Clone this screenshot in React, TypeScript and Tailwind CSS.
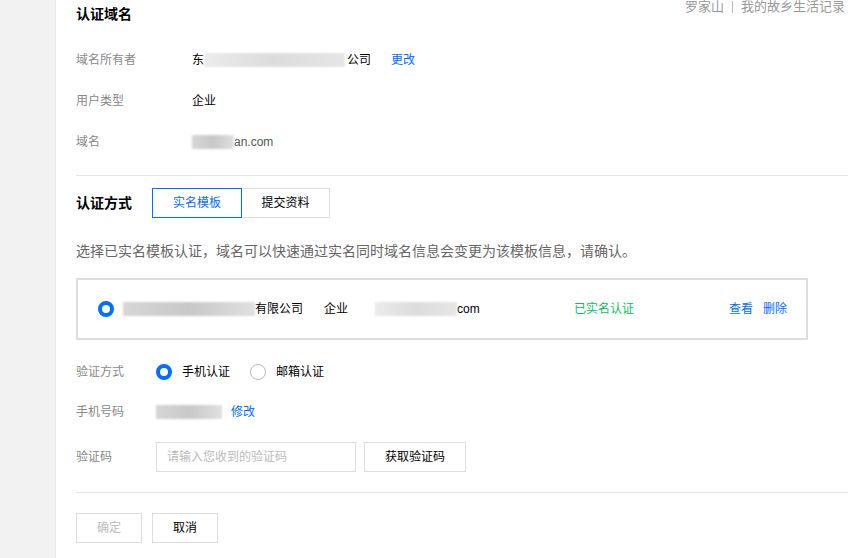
import React from "react";

const font = { fontFamily: '"Liberation Sans", "Noto Sans CJK SC", sans-serif' };

// blurred-out private text
function Smudge({ w, tone = "light" }: { w: number; tone?: "light" | "dark" }) {
  return (
    <span
      className={
        tone === "dark"
          ? "inline-block h-[14px] align-middle bg-gradient-to-r from-[#d6d6d6] via-[#c8c8c8] to-[#e0e0e0] blur-[1px]"
          : "inline-block h-[14px] align-middle bg-gradient-to-r from-[#ebebeb] via-[#dcdcdc] to-[#e6e6e6] blur-[1px]"
      }
      style={{ width: w }}
    />
  );
}

function Radio({ checked }: { checked: boolean }) {
  return checked ? (
    <span className="inline-block w-4 h-4 rounded-full border-[4px] border-[#006eff] bg-white shrink-0" />
  ) : (
    <span className="inline-block w-4 h-4 rounded-full border border-[#bbbbbb] bg-white shrink-0" />
  );
}

function InfoRow({ label, children }: { label: string; children: React.ReactNode }) {
  return (
    <div className="flex items-center h-[41px]">
      <div className="w-[116px] text-[12px] text-[#888]">{label}</div>
      <div className="flex items-center text-[12px] text-black">{children}</div>
    </div>
  );
}

function FormRow({ label, children, className = "h-[40px]" }: { label: string; children: React.ReactNode; className?: string }) {
  return (
    <div className={"flex items-center " + className}>
      <div className="w-[80px] text-[12px] text-[#888]">{label}</div>
      <div className="flex items-center text-[12px] text-black">{children}</div>
    </div>
  );
}

export default function App() {
  return (
    <div className="flex w-[848px] h-[558px] bg-[#f2f2f2] overflow-hidden" style={font}>
      <div className="w-[56px] shrink-0 bg-[#f2f2f2] border-r border-[#e8e8e8]" />
      <div className="relative flex-1 bg-white pl-[20px]">
        <div className="absolute top-0 right-[3px] flex items-center h-[14px] text-[13px] text-[#999] leading-[14px]">
          <span>罗家山</span>
          <span className="mx-[8px] inline-block w-px h-[12px] bg-[#bbb]" />
          <span>我的故乡生活记录</span>
        </div>

        <div className="h-[28px] leading-[28px] text-[14px] font-bold text-black">认证域名</div>

        <div className="mt-[11px]">
          <InfoRow label="域名所有者">
            <span>东</span>
            <Smudge w={141} />
            <span className="ml-[2px]">公司</span>
            <a className="ml-[20px] text-[#006eff]">更改</a>
          </InfoRow>
          <InfoRow label="用户类型">
            <span>企业</span>
          </InfoRow>
          <InfoRow label="域名">
            <Smudge w={42} tone="dark" />
            <span className="text-[#555]">an.com</span>
          </InfoRow>
        </div>

        <div className="mt-[13px] border-t border-[#e5e5e5]" />

        <div className="mt-[12px] flex items-center h-[30px]">
          <div className="w-[76px] text-[14px] font-bold text-black">认证方式</div>
          <div className="flex h-[30px] text-[12px]">
            <button className="w-[90px] h-full border border-[#006eff] text-[#006eff] bg-white">实名模板</button>
            <button className="w-[88px] h-full border border-l-0 border-[#dddddd] text-black bg-white">提交资料</button>
          </div>
        </div>

        <div className="mt-[23px] h-[20px] leading-[20px] text-[14px] text-[#666]">
          选择已实名模板认证，域名可以快速通过实名同时域名信息会变更为该模板信息，请确认。
        </div>

        <div className="mt-[17px] w-[732px] h-[62px] border-2 border-[#dddddd] flex items-center pl-[20px] text-[12px] text-black">
          <Radio checked />
          <div className="ml-[9px] w-[201px] flex items-center">
            <Smudge w={132} tone="dark" />
            <span>有限公司</span>
          </div>
          <div className="w-[51px]">企业</div>
          <div className="w-[199px] flex items-center">
            <Smudge w={82} />
            <span>com</span>
          </div>
          <div className="w-[155px] text-[#0abf5b]">已实名认证</div>
          <a className="text-[#006eff]">查看</a>
          <a className="ml-[10px] text-[#006eff]">删除</a>
        </div>

        <div className="mt-[12px]">
          <FormRow label="验证方式">
            <Radio checked />
            <span className="ml-[10px]">手机认证</span>
            <span className="ml-[20px]" />
            <Radio checked={false} />
            <span className="ml-[10px]">邮箱认证</span>
          </FormRow>
          <FormRow label="手机号码">
            <Smudge w={66} tone="dark" />
            <a className="ml-[9px] text-[#006eff]">修改</a>
          </FormRow>
          <div className="mt-[10px]">
            <FormRow label="验证码" className="h-[30px]">
              <input
                className="w-[200px] h-[30px] border border-[#dddddd] px-[10px] text-[12px] outline-none placeholder:text-[#bbb]"
                placeholder="请输入您收到的验证码"
              />
              <button className="ml-[8px] w-[102px] h-[30px] border border-[#dddddd] bg-white text-black">获取验证码</button>
            </FormRow>
          </div>
        </div>

        <div className="mt-[20px] border-t border-[#e5e5e5]" />

        <div className="mt-[20px] flex gap-[10px] text-[12px]">
          <button className="w-[66px] h-[30px] border border-[#dddddd] bg-white text-[#bbb]">确定</button>
          <button className="w-[66px] h-[30px] border border-[#dddddd] bg-white text-black">取消</button>
        </div>
      </div>
    </div>
  );
}
